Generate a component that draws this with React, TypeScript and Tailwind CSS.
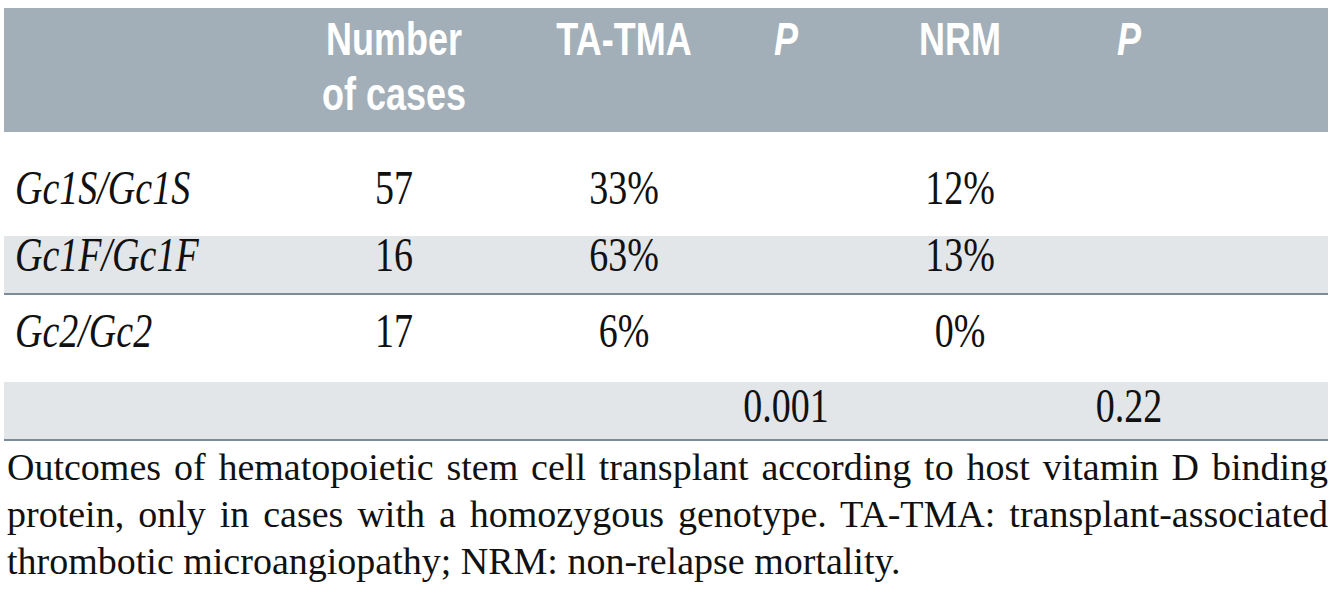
const serif = "font-['Liberation_Serif',serif]";
const sans = "font-['Liberation_Sans',Arial,sans-serif]";
const cols = "grid grid-cols-[265px_250px_210px_114px_234px_104px_1fr]";

type Row = {
  label: string;
  n: string;
  tma: string;
  p1?: string;
  nrm: string;
  p2?: string;
  rowClass: string;
};

const rows: Row[] = [
  { label: "Gc1S/Gc1S", n: "57", tma: "33%", nrm: "12%", rowClass: "h-[104px] pt-[37px] bg-white" },
  { label: "Gc1F/Gc1F", n: "16", tma: "63%", nrm: "13%", rowClass: "h-[57px] pt-0 bg-[#e2e6e9]" },
  { label: "Gc2/Gc2", n: "17", tma: "6%", nrm: "0%", rowClass: "h-[87px] pt-[17px] bg-white" },
  { label: "", n: "", tma: "", p1: "0.001", nrm: "", p2: "0.22", rowClass: "h-[57px] pt-[5px] bg-[#e2e6e9]" },
];

function Cell({ children, left }: { children?: string; left?: boolean }) {
  return (
    <div className={left ? "pl-[11px] text-left" : "text-center"}>
      <span className={`inline-block scale-y-[1.25] whitespace-nowrap ${left ? "italic" : ""}`}>{children}</span>
    </div>
  );
}

function Head({ children, italic }: { children: React.ReactNode; italic?: boolean }) {
  return (
    <div className="text-center">
      <div className={`origin-top scale-y-[1.3] leading-[42px] ${italic ? "italic" : ""}`}>{children}</div>
    </div>
  );
}

function BodyRow({ r }: { r: Row }) {
  return (
    <div className={`${cols} ${r.rowClass}`}>
      <Cell left>{r.label}</Cell>
      <Cell>{r.n}</Cell>
      <Cell>{r.tma}</Cell>
      <Cell>{r.p1}</Cell>
      <Cell>{r.nrm}</Cell>
      <Cell>{r.p2}</Cell>
      <div />
    </div>
  );
}

export default function App() {
  return (
    <div className="min-h-screen bg-white pt-[8px] text-[#111]">
      <div className="ml-[4px] w-[1324px]">
        {/* header band */}
        <div className={`${cols} ${sans} h-[124px] bg-[#a2afb8] pt-[4px] text-[36px] font-bold text-white`}>
          <div />
          <Head>
            Number
            <br />
            of cases
          </Head>
          <Head>TA-TMA</Head>
          <Head italic>P</Head>
          <Head>NRM</Head>
          <Head italic>P</Head>
          <div />
        </div>

        {/* body */}
        <div className={`${serif} text-[38px] leading-[38px]`}>
          {rows.slice(0, 2).map((r, i) => (
            <BodyRow key={i} r={r} />
          ))}
          <div className="h-[2px] bg-[#7b8b98]" />
          {rows.slice(2).map((r, i) => (
            <BodyRow key={i} r={r} />
          ))}
          <div className="h-[2px] bg-[#7b8b98]" />
        </div>

        <p className={`${serif} mt-[3px] pl-[3px] text-justify text-[38px] leading-[47px] text-[#111]`}>
          Outcomes of hematopoietic stem cell transplant according to host vitamin D binding protein, only in cases with a
          homozygous genotype. TA-TMA: transplant-associated thrombotic microangiopathy; NRM: non-relapse mortality.
        </p>
      </div>
    </div>
  );
}
